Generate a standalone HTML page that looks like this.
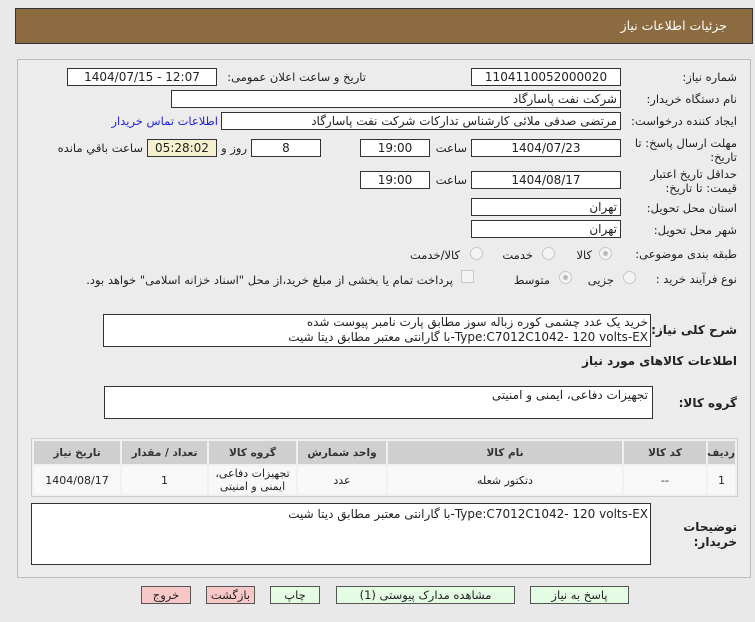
<!DOCTYPE html>
<html><head><meta charset="utf-8"><style>
*{box-sizing:border-box;margin:0;padding:0}
body{width:755px;height:622px;background:#e9e9e9;font-family:"DejaVu Sans",sans-serif;font-size:11px;color:#222;position:relative;overflow:hidden}
.a{position:absolute}
.box{position:absolute;background:#fff;border:1px solid #333;height:18px;line-height:16px;text-align:center;font-size:12px;white-space:nowrap;overflow:hidden}
.lbl{position:absolute;direction:rtl;white-space:nowrap;font-size:11.5px}
.b{font-weight:bold;font-size:12px}
.r{position:absolute;width:13px;height:13px;border-radius:50%;border:1px solid #c8c8c8;background:#f4f4f4}
.r.s::after{content:"";position:absolute;left:3px;top:3px;width:5px;height:5px;border-radius:50%;background:#bbb}
.btn{position:absolute;height:18px;border:1px solid #555;text-align:center;line-height:16px;font-size:11.5px;direction:rtl}
table{position:absolute;border-collapse:separate;border-spacing:2px;background:#f0f0f0;border:1px solid #ccc;direction:rtl;table-layout:fixed}
th{background:#cfcfcf;font-weight:bold;height:23px;font-size:10.5px;color:#333}
td{background:#f8f8f8;height:28px;text-align:center;font-size:11px;line-height:13px}
</style></head><body>
<div class="a" style="left:15px;top:8px;width:738px;height:36px;background:#8c6b40;border:1px solid #333"></div>
<div class="lbl" style="right:28px;top:18px;color:#fff;font-size:12.5px">جزئیات اطلاعات نیاز</div>
<div class="a" style="left:17px;top:59px;width:734px;height:519px;border:1px solid #bbb;background:#ececec"></div>

<div class="lbl" style="right:18px;top:70px">شماره نیاز:</div>
<div class="box" style="left:471px;top:68px;width:150px">1104110052000020</div>
<div class="lbl" style="right:389px;top:70px">تاریخ و ساعت اعلان عمومی:</div>
<div class="box" style="left:67px;top:68px;width:150px">1404/07/15 - 12:07</div>

<div class="lbl" style="right:18px;top:92px">نام دستگاه خریدار:</div>
<div class="box" style="left:171px;top:90px;width:450px;text-align:right;padding-right:3px;direction:rtl">شرکت نفت پاسارگاد</div>

<div class="lbl" style="right:18px;top:114px">ایجاد کننده درخواست:</div>
<div class="box" style="left:221px;top:112px;width:400px;text-align:right;padding-right:3px;direction:rtl">مرتضی صدقی ملائی کارشناس تدارکات شرکت نفت پاسارگاد</div>
<div class="lbl" style="right:537px;top:114px;color:#2222dd">اطلاعات تماس خریدار</div>

<div class="lbl" style="right:18px;top:136px;line-height:14px;text-align:right">مهلت ارسال پاسخ: تا<br>تاریخ:</div>
<div class="box" style="left:471px;top:139px;width:150px">1404/07/23</div>
<div class="lbl" style="right:288px;top:141px">ساعت</div>
<div class="box" style="left:360px;top:139px;width:70px">19:00</div>
<div class="box" style="left:251px;top:139px;width:70px">8</div>
<div class="lbl" style="right:508px;top:141px">روز و</div>
<div class="box" style="left:147px;top:139px;width:70px;background:#f5f1cf">05:28:02</div>
<div class="lbl" style="right:612px;top:141px">ساعت باقي مانده</div>

<div class="lbl" style="right:18px;top:167px;line-height:14px;text-align:right">حداقل تاریخ اعتبار<br>قیمت: تا تاریخ:</div>
<div class="box" style="left:471px;top:171px;width:150px">1404/08/17</div>
<div class="lbl" style="right:288px;top:173px">ساعت</div>
<div class="box" style="left:360px;top:171px;width:70px">19:00</div>

<div class="lbl" style="right:18px;top:201px">استان محل تحویل:</div>
<div class="box" style="left:471px;top:198px;width:150px;text-align:right;padding-right:3px">تهران</div>
<div class="lbl" style="right:18px;top:223px">شهر محل تحویل:</div>
<div class="box" style="left:471px;top:220px;width:150px;text-align:right;padding-right:3px">تهران</div>

<div class="lbl" style="right:18px;top:247px">طبقه بندی موضوعی:</div>
<div class="r s" style="left:599px;top:247px"></div><div class="lbl" style="right:163px;top:248px">کالا</div>
<div class="r" style="left:542px;top:247px"></div><div class="lbl" style="right:222px;top:248px">خدمت</div>
<div class="r" style="left:470px;top:247px"></div><div class="lbl" style="right:295px;top:248px">کالا/خدمت</div>

<div class="lbl" style="right:18px;top:272px">نوع فرآیند خرید :</div>
<div class="r" style="left:623px;top:271px"></div><div class="lbl" style="right:141px;top:273px">جزیی</div>
<div class="r s" style="left:559px;top:271px"></div><div class="lbl" style="right:205px;top:273px">متوسط</div>
<div class="a" style="left:461px;top:270px;width:13px;height:13px;border:1px solid #c8c8c8;background:#f4f4f4"></div>
<div class="lbl" style="right:302px;top:273px">پرداخت تمام یا بخشی از مبلغ خرید،از محل "اسناد خزانه اسلامی" خواهد بود.</div>

<div class="lbl b" style="right:18px;top:323px">شرح کلی نیاز:</div>
<div class="box" style="left:103px;top:314px;width:548px;height:33px;text-align:right;direction:rtl;padding-right:2px;line-height:15px">خرید یک عدد چشمی کوره زباله سوز مطابق پارت نامبر پیوست شده<br>Type:C7012C1042- 120 volts-EX-با گارانتی معتبر مطابق دیتا شیت</div>

<div class="lbl b" style="right:18px;top:354px">اطلاعات کالاهای مورد نیاز</div>
<div class="lbl b" style="right:18px;top:396px">گروه کالا:</div>
<div class="box" style="left:104px;top:386px;width:549px;height:33px;text-align:right;direction:rtl;padding-right:4px;line-height:16px">تجهیزات دفاعی، ایمنی و امنیتی</div>

<table style="left:31px;top:438px;width:707px">
<colgroup><col style="width:27px"><col style="width:82px"><col style="width:234px"><col style="width:88px"><col style="width:87px"><col style="width:85px"><col></colgroup>
<tr><th>ردیف</th><th>کد کالا</th><th>نام کالا</th><th>واحد شمارش</th><th>گروه کالا</th><th>تعداد / مقدار</th><th>تاریخ نیاز</th></tr>
<tr><td>1</td><td>--</td><td>دتکتور شعله</td><td>عدد</td><td>تجهیزات دفاعی،<br>ایمنی و امنیتی</td><td>1</td><td>1404/08/17</td></tr>
</table>

<div class="lbl b" style="right:18px;top:520px;line-height:15px;text-align:right">توضیحات<br>خریدار:</div>
<div class="box" style="left:31px;top:503px;width:620px;height:62px;text-align:right;direction:rtl;padding-right:2px;line-height:20px">Type:C7012C1042- 120 volts-EX-با گارانتی معتبر مطابق دیتا شیت</div>

<div class="btn" style="left:141px;top:586px;width:50px;background:#f8c8c8">خروج</div>
<div class="btn" style="left:206px;top:586px;width:49px;background:#f8c8c8">بازگشت</div>
<div class="btn" style="left:270px;top:586px;width:50px;background:#e4fbe4">چاپ</div>
<div class="btn" style="left:336px;top:586px;width:179px;background:#e4fbe4">مشاهده مدارک پیوستی (1)</div>
<div class="btn" style="left:530px;top:586px;width:99px;background:#e4fbe4">پاسخ به نیاز</div>
</body></html>
